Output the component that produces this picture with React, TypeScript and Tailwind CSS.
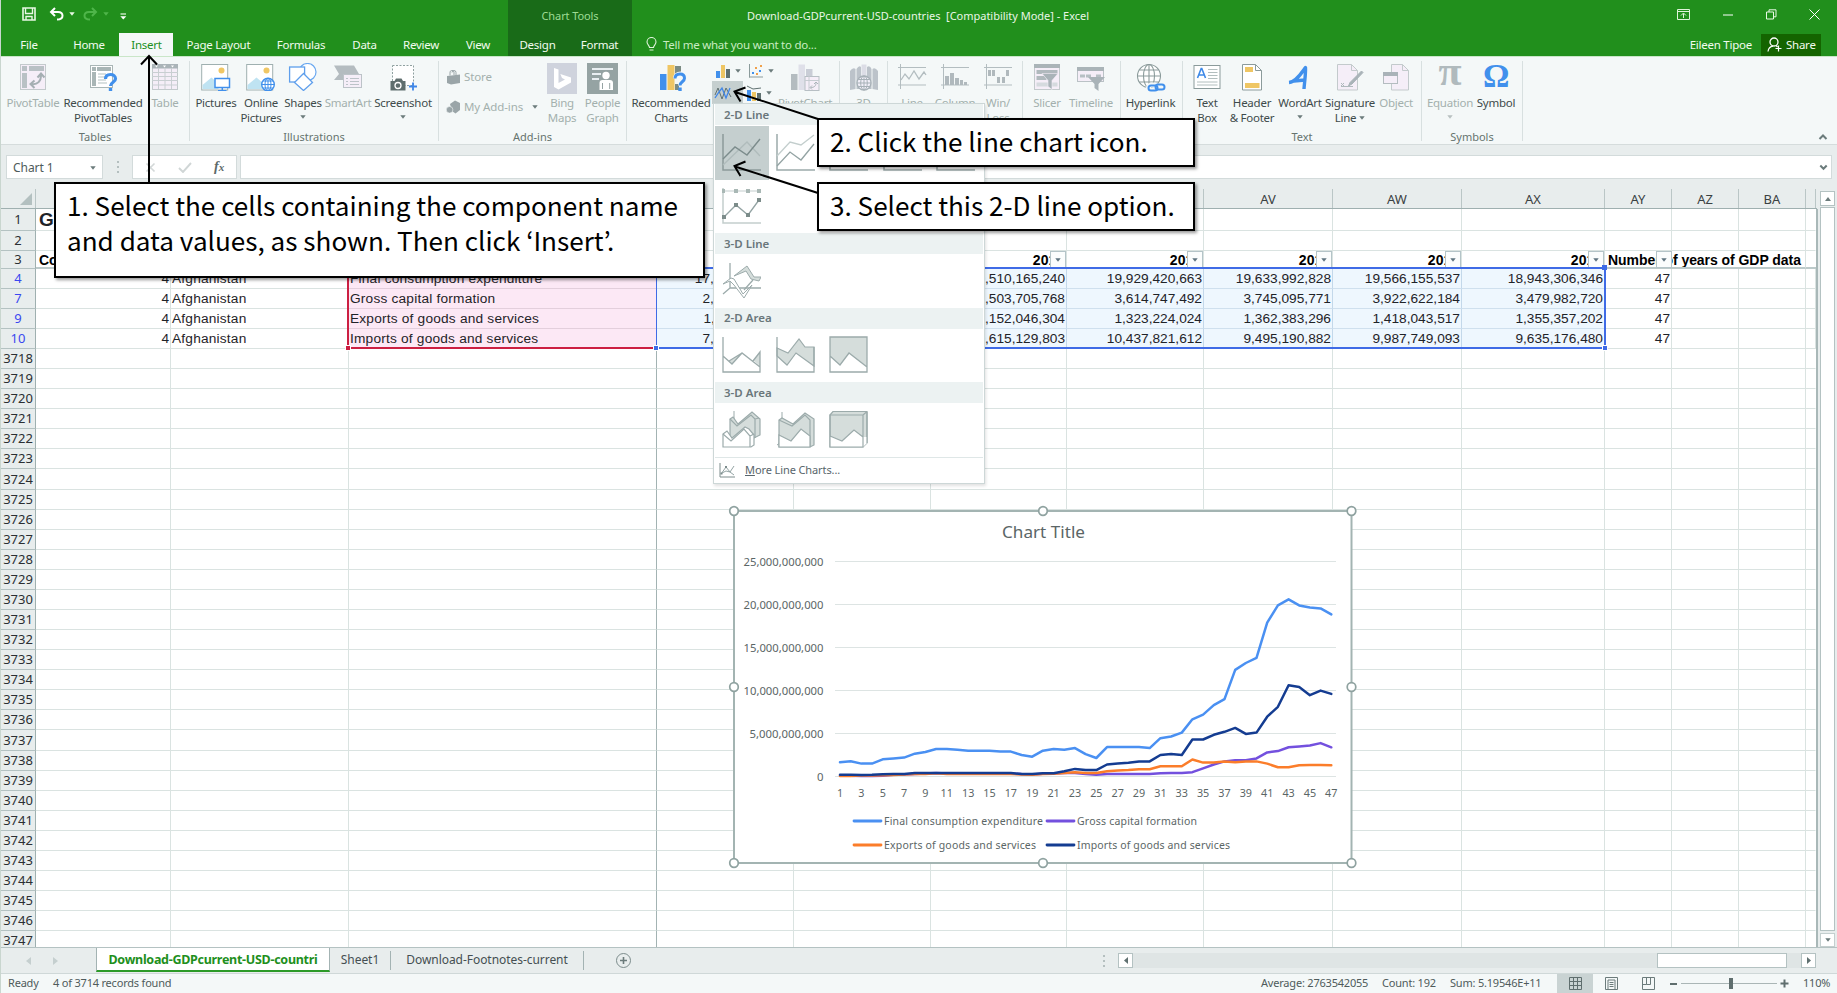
import React from "react";

type Kids = { children?: React.ReactNode };

const G = "#9aa5a8";
const GL = "#b4bcc0";
const PK = "#f5eef8";

const Svg = ({ w = 28, h = 28, children }: Kids & { w?: number; h?: number }) => (
  <svg width={w} height={h} viewBox={`0 0 ${w} ${h}`} fill="none" className="block shrink-0">
    {children}
  </svg>
);

const Caret = ({ c = "#6b7b7b" }: { c?: string }) => (
  <svg width="6" height="4" viewBox="0 0 6 4" className="inline-block shrink-0">
    <path d="M0.3 0.3h5.4L3 3.8z" fill={c} />
  </svg>
);

/* ---------- ribbon icons ---------- */
const PivotTableIcon = () => (
  <Svg>
    <rect x="1.500" y="1.500" width="25" height="25" fill={PK} stroke="#c3cacc" />
    <path d="M3 3h5v5H3zM10 3h15v5H10zM3 10h5v15H3z" fill="#b9c1c5" />
    <path d="M12 21c7 1 10-3 10-9M18.500 14.500L22 10.500l3.500 4M15.500 17.500L11.500 21l4 4" stroke="#a5afb3" strokeWidth="2" />
  </Svg>
);
const RecPivotIcon = () => (
  <Svg w={30}>
    <rect x="2.500" y="2.500" width="22" height="22" fill="#fff" stroke="#a9b6b6" />
    <path d="M4 4h4v4H4zM9 4h14v4H9zM4 9h4v14H4z" fill="#a9b6b6" />
    <path d="M10 11h8M10 14h7M10 17h8M10 20h9" stroke="#cdd6d6" strokeWidth="1.500" />
    <path d="M17.500 16c0-3 2.200-4.500 5-4.500s5 1.600 5 4.200c0 3.600-5 3.500-5 7.300" stroke="#4190ec" strokeWidth="3.200" />
    <rect x="20.800" y="25" width="3.400" height="3" fill="#4190ec" />
  </Svg>
);
const TableIcon = () => (
  <Svg>
    <rect x="1.500" y="2" width="25" height="24.500" fill={PK} stroke="#c3cacc" />
    <rect x="1" y="1" width="26" height="4.500" fill="#aab4b8" />
    <path d="M1 9.500h26M1 13.500h26M1 17.500h26M1 22h26M7.500 5v21M14 5v21M20.500 5v21" stroke="#c9cfd2" />
    <path d="M4 2.500h3l-1.500 2zM12 2.500h3l-1.500 2zM20 2.500h3l-1.500 2z" fill="#fff" />
  </Svg>
);
const PicBase = () => (
  <>
    <rect x="0.700" y="1.500" width="26" height="25.500" fill="#fff" stroke="#9fb0b0" />
    <circle cx="20.500" cy="7.500" r="3" fill="#f0c765" />
    <path d="M1.500 22l9-7.500 7 6V26h-16z" fill="#bfe3f2" />
  </>
);
const PicturesIcon = () => (
  <Svg w={30}>
    <PicBase />
    <rect x="14" y="15.500" width="14.500" height="9" fill="#fff" stroke="#4190ec" strokeWidth="1.500" />
    <path d="M21.300 25v2.500M17 27.700h8.500" stroke="#4190ec" strokeWidth="1.500" />
  </Svg>
);
const OnlinePicturesIcon = () => (
  <Svg w={30}>
    <PicBase />
    <circle cx="22" cy="21.500" r="6.300" fill="#fff" stroke="#4190ec" strokeWidth="1.400" />
    <path d="M22 15v13M15.700 21.500h12.600M17 18h10M17 25h10" stroke="#4190ec" />
    <ellipse cx="22" cy="21.500" rx="3" ry="6.300" stroke="#4190ec" />
  </Svg>
);
const ShapesIcon = () => (
  <Svg w={30}>
    <circle cx="19.500" cy="9" r="8.500" fill="#fff" stroke="#6aa8f0" strokeWidth="1.200" />
    <rect x="1.600" y="4" width="15" height="15" fill="#fff" stroke="#5f9fec" strokeWidth="1.300" />
    <path d="M15.500 10.500l9 9-9 8-9-8z" fill="#fff" stroke="#5f9fec" strokeWidth="1.300" />
  </Svg>
);
const SmartArtIcon = () => (
  <Svg w={30}>
    <path d="M1 2.500h20l5 8.500-4 6H1l5-6z" fill={GL} />
    <rect x="10.500" y="11.500" width="18" height="13" fill={PK} stroke="#bcc3c8" />
    <path d="M13 15.500h2M17 15.500h9M13 18.500h2M17 18.500h9M13 21.500h2M17 21.500h9" stroke="#bcc3c8" />
  </Svg>
);
const ScreenshotIcon = () => (
  <Svg w={28}>
    <rect x="3.500" y="2.500" width="21" height="20" fill="#fff" stroke="#8fa0a0" strokeDasharray="2 1.500" />
    <path d="M1.500 18h4l1.500-2.500h5.500L14 18h2.500v9.500h-15z" fill="#5f6e6e" />
    <circle cx="9" cy="22.500" r="3" stroke="#fff" strokeWidth="1.300" />
    <path d="M24 19.500v8M20 23.500h8" stroke="#3f86e8" strokeWidth="1.800" />
  </Svg>
);
const StoreIcon = () => (
  <Svg w={15} h={16}>
    <path d="M1 7l13-1.500V14L5 15.500 1 14z" fill={G} />
    <path d="M4 6.500V4a2 2 0 014-1v3M6 3.500a2 2 0 014 0V6" stroke={G} />
  </Svg>
);
const AddinsIcon = () => (
  <Svg w={15} h={14}>
    <path d="M4 4l5-3.500L14 3v7l-4.500 3.500L6 11z" fill={G} />
    <circle cx="3.600" cy="9.800" r="3.300" fill={G} stroke="#f4f8f8" strokeWidth="0.600" />
  </Svg>
);
const BingIcon = () => (
  <Svg w={30} h={31}>
    <rect width="30" height="31" fill="#cfd3dd" />
    <path d="M7 5l4.500 1.600v13.500L18 16.500l-3-1.400-1.700-4.200L24 14.600v5L11.500 26.500 7 24z" fill="#fff" />
  </Svg>
);
const PeopleIcon = () => (
  <Svg w={31} h={31}>
    <rect width="31" height="31" fill="#95a3a3" />
    <path d="M5 6h21M5 11h9M5 16h7" stroke="#e9eff2" strokeWidth="2" />
    <circle cx="19" cy="12.500" r="3.700" fill="#fff" />
    <path d="M12.500 27v-7q0-3 3-3h7.500q3 0 3 3v7z" fill="#fff" />
    <path d="M15.500 20v6M22.700 20v6" stroke="#95a3a3" />
  </Svg>
);
const RecChartsIcon = () => (
  <Svg w={28}>
    <rect x="2" y="11" width="6.500" height="16" fill="#4190ec" />
    <rect x="9.500" y="2" width="7" height="25" fill="#efc664" />
    <path d="M17 3h6v8h-6zM17 21h4v6h-4z" fill="#7b8b83" />
    <path d="M17.500 15.500c0-3 2.200-4.500 5-4.500s5 1.600 5 4.200c0 3.600-5 3.500-5 7.300" stroke="#f4f8f8" strokeWidth="5" />
    <path d="M17 15.500c0-3 2.200-4.500 5-4.500s4.500 1.600 4.500 4.200c0 3.600-4.500 3.500-4.500 7.300" stroke="#4190ec" strokeWidth="3" />
    <rect x="20.300" y="24.500" width="3.400" height="3.500" fill="#4190ec" />
  </Svg>
);
const PivotChartIcon = () => (
  <Svg w={30}>
    <rect x="1" y="11" width="6.500" height="16" fill={GL} />
    <rect x="8.500" y="1.500" width="6.500" height="25.500" fill="#dfe0e9" />
    <rect x="16" y="6" width="6.500" height="10" fill="#c9cdd6" />
    <rect x="15" y="13.500" width="14" height="14" fill={PK} stroke="#b7bfc4" />
    <path d="M15 17.500h14M19 13v14" stroke="#c6ccd1" />
    <path d="M20.500 24.500c4 0 5.500-1.500 5.500-5M24 21l2-2 2 2M22 22.500l-2 2 2 2" stroke="#adb6bb" />
  </Svg>
);
const MapIcon = () => (
  <Svg w={30}>
    <path d="M1 8q3-4 5.500-2v20L1 27zM29 8q-3-4-5.500-2v20l5.500 1zM7.500 6Q10 2 12 4v22H7.500zM18 4q3-2 4.500 2v20H18z" fill="#bcc3ca" />
    <rect x="12.500" y="1.500" width="5" height="24" fill="#dcdde6" />
    <circle cx="15" cy="20" r="7" fill="#f1eff8" stroke="#a7b1b7" strokeWidth="1.300" />
    <path d="M15 13v14M8 20h14M9.500 16.500h11M9.500 23.500h11" stroke="#a7b1b7" />
    <ellipse cx="15" cy="20" rx="3.300" ry="7" stroke="#a7b1b7" />
  </Svg>
);
const SparkFrame = () => <path d="M1 4.500h28M1 22h28M3.500 1v25" stroke="#b3bdc0" />;
const SparkLineIcon = () => (
  <Svg w={30}>
    <SparkFrame />
    <path d="M4 17l4-6 4 5 5-8 5 8 5-7 2 3" stroke="#b3bdc0" strokeWidth="1.300" />
  </Svg>
);
const SparkColIcon = () => (
  <Svg w={30}>
    <SparkFrame />
    <path d="M5 13h4v9H5zM10 10h4v12h-4zM15 15h4v7h-4zM20 17h3v5h-3zM24 19h3v3h-3z" fill="#b0b9bd" />
  </Svg>
);
const SparkWinIcon = () => (
  <Svg w={30}>
    <SparkFrame />
    <path d="M5 7h3v6H5zM9 7h3v6H9zM14 14h3v6h-3zM19 14h3v6h-3zM23 7h3v6h-3z" fill="#b0b9bd" />
  </Svg>
);
const SlicerIcon = () => (
  <Svg>
    <rect x="1.500" y="1.500" width="25" height="25" fill={PK} stroke="#c3cacc" />
    <rect x="1" y="1" width="26" height="4" fill="#aab4b8" />
    <rect x="3.500" y="7" width="21" height="4" fill="#b0b9bd" />
    <rect x="3.500" y="13" width="10" height="4" fill="#b0b9bd" />
    <rect x="3.500" y="19.500" width="21" height="4" fill="#d5dade" />
    <path d="M9 10.500h16l-6 7v9l-4-3v-6z" fill="#a9b3b8" stroke={PK} strokeWidth="0.600" />
  </Svg>
);
const TimelineIcon = () => (
  <Svg w={30}>
    <rect x="1.500" y="4.500" width="26" height="14" fill={PK} stroke="#bac2c6" />
    <rect x="1" y="4" width="27" height="4" fill="#aab4b8" />
    <path d="M4 11.500h5v3H4zM10 11.500h5v3h-5zM20 11.500h5v3h-5z" fill="#b7bfc4" />
    <path d="M12 14h17l-6.500 7v7l-4-3v-4z" fill="#a9b3b8" />
  </Svg>
);
const HyperlinkIcon = () => (
  <Svg w={30} h={30}>
    <g stroke="#8b9b9b" strokeWidth="1.100">
      <circle cx="13" cy="13" r="11.500" fill="#fff" />
      <ellipse cx="13" cy="13" rx="5.500" ry="11.500" />
      <path d="M13 1.500v23M1.500 13h23M3.500 7h19M3.500 19h19" />
    </g>
    <rect x="12.500" y="22" width="9" height="5.500" rx="2.700" stroke="#f4f8f8" strokeWidth="5" />
    <rect x="12.500" y="22.500" width="9" height="5" rx="2.500" stroke="#4190ec" strokeWidth="2" />
    <rect x="19.500" y="21.500" width="9" height="5" rx="2.500" stroke="#4190ec" strokeWidth="2" />
  </Svg>
);
const TextBoxIcon = () => (
  <Svg w={28}>
    <rect x="1" y="2.500" width="26" height="23" fill="#fff" stroke="#8b9b9b" />
    <path d="M4.500 15l3.700-9.500h.6L12.500 15M6 12h5" stroke="#3f8ae8" strokeWidth="1.600" />
    <path d="M15 6.500h9.500M15 9.500h9.500M15 12.500h9.500M15 15.500h9.500M4 19h20.500M4 22h20.500" stroke="#b2bebe" />
  </Svg>
);
const HeaderIcon = () => (
  <Svg w={22}>
    <path d="M1.500 1.500h13l6 6v19.500h-19z" fill="#fff" stroke="#8b9b9b" />
    <path d="M14.500 1.500v6h6" stroke="#8b9b9b" />
    <rect x="4" y="4" width="8" height="5" fill="#efc664" />
    <rect x="4" y="20" width="14.500" height="5" fill="#efc664" />
  </Svg>
);
const WordArtIcon = () => (
  <Svg w={26}>
    <path d="M2 19.500C9 19 14.500 10 18.500 4.500c.3 7-1 14-1.500 21.500M7 18l11-1" stroke="#4190ec" strokeWidth="3.400" strokeLinejoin="round" />
  </Svg>
);
const SignatureIcon = () => (
  <Svg w={28}>
    <path d="M1.500 1.500h14l6 6v19.500h-20z" fill={PK} stroke="#c3cacc" />
    <path d="M15.500 1.500v6h6" stroke="#c3cacc" />
    <path d="M25.500 8l1.500 1.500L16 21l-3.500 2 1.500-3.500z" fill="#a9b3b8" stroke="#a9b3b8" />
    <path d="M5 23.500h12M5 20l3 3M8 20l-3 3" stroke="#b0b9bd" />
  </Svg>
);
const ObjectIcon = () => (
  <Svg w={28}>
    <path d="M9.500 1.500h11l6 6v19.500h-17z" fill={PK} stroke="#c3cacc" />
    <path d="M20.500 1.500v6h6" stroke="#c3cacc" />
    <rect x="1.500" y="9.500" width="14" height="11" fill={PK} stroke="#b4bcc0" />
    <rect x="1" y="9" width="15" height="4" fill="#a9b3b8" />
  </Svg>
);

/* ---------- ribbon parts ---------- */
type BtnProps = { className: string; icon: React.ReactNode; lines: string[]; off?: boolean; caret?: "own" | "inline" };
const Btn = ({ className, icon, lines, off, caret }: BtnProps) => (
  <div className={`flex shrink-0 flex-col items-center whitespace-nowrap text-[11.500px] leading-[15px] tracking-[-0.25px] ${off ? "text-[#a3b0ad]" : "text-[#3e4b4b]"} ${className}`}>
    <div className="flex h-[34px] items-start justify-center pt-[2px]">{icon}</div>
    {lines.map((l, i) => (
      <div key={l} className="flex items-center gap-[3px]">
        {l}
        {caret === "inline" && i === lines.length - 1 && <Caret />}
      </div>
    ))}
    {caret === "own" && (
      <div className="flex h-[14px] items-center">
        <Caret c={off ? "#b8c1c1" : undefined} />
      </div>
    )}
  </div>
);

const Group = ({ className, label, children }: Kids & { className: string; label: string }) => (
  <div className={`mt-1 flex h-20 shrink-0 flex-col border-r border-[#d8e0e0] ${className}`}>
    <div className="flex h-[68px] shrink-0">{children}</div>
    <div className="text-center text-[11px] leading-[15px] text-[#66746f]">{label}</div>
  </div>
);

const Tab = ({ className, children }: Kids & { className: string }) => (
  <div className={`flex h-full shrink-0 items-center justify-center pl-px whitespace-nowrap ${className}`}>{children}</div>
);

const TitleBar = () => (
  <div className="flex h-[33px] shrink-0 text-[11px] text-[#e9f6e6]">
    <div className="flex w-[507px] shrink-0 items-center pb-[5px] pl-[21px]">
      <Svg w={14} h={14}>
        <path d="M1 1h12v12H1z" stroke="#e8f8e4" strokeWidth="1.600" />
        <path d="M3.500 1v5.500h7V1M4 13V9.500h6V13" stroke="#e8f8e4" strokeWidth="1.400" />
      </Svg>
      <div className="ml-[13px] flex items-center gap-[5px]">
        <Svg w={15} h={14}>
          <path d="M6 1L2 5l4 4M2 5h7c3 0 4.500 1.500 4.500 3.700S11.500 12.500 8 12.500" stroke="#fff" strokeWidth="2" />
        </Svg>
        <Caret c="#e8f8e4" />
      </div>
      <div className="ml-[8px] flex items-center gap-[5px]">
        <Svg w={15} h={14}>
          <path d="M9 1l4 4-4 4M13 5H6C3 5 1.500 6.500 1.500 8.700S3.500 12.500 7 12.500" stroke="#4fb54a" strokeWidth="2" />
        </Svg>
        <Caret c="#4fb54a" />
      </div>
      <div className="mt-[4px] ml-[11px]">
        <Svg w={7} h={7}>
          <path d="M0.500 1h5.500" stroke="#e8f8e4" strokeWidth="1.200" />
          <path d="M0.300 3.200h6L3.300 6.500z" fill="#fff" />
        </Svg>
      </div>
    </div>
    <div className="flex w-[124px] shrink-0 items-center justify-center bg-[#196b18] tracking-[-0.1px] text-[#9ddb94]">Chart Tools</div>
    <div className="ml-[115px] flex w-[343px] shrink-0 items-center whitespace-pre tracking-[-0.020px]">
      {"Download-GDPcurrent-USD-countries  [Compatibility Mode] - Excel"}
    </div>
    <div className="ml-auto flex items-center gap-[32px] pr-[17px] pb-[5px]">
      <Svg w={13} h={11}>
        <path d="M0.500 0.500h12v10H0.500zM0.500 2.500h12M6.500 9V4.500M4 6.500L6.500 4 9 6.500" stroke="#dff3da" />
      </Svg>
      <Svg w={12} h={11}><path d="M1 6h10" stroke="#fff" /></Svg>
      <Svg w={11} h={11}>
        <path d="M0.500 3h7v7h-7zM3 3V0.800h7v7H7.500" stroke="#e9f8e6" />
      </Svg>
      <Svg w={11} h={11}><path d="M0.500 0.500l10 10M10.500 0.500l-10 10" stroke="#fff" /></Svg>
    </div>
  </div>
);

const TabRow = () => (
  <div className="flex h-[23px] shrink-0 text-[11.500px] tracking-[-0.25px] text-[#f2fbef]">
    <Tab className="w-[55px]">File</Tab>
    <Tab className="ml-[2px] w-[61px]">Home</Tab>
    <Tab className="w-[54px] bg-[#f4f8f8] text-[#218f1c]">Insert</Tab>
    <Tab className="w-[90px]">Page Layout</Tab>
    <Tab className="w-[75px]">Formulas</Tab>
    <Tab className="w-[52px]">Data</Tab>
    <Tab className="w-[61px]">Review</Tab>
    <Tab className="w-[53px]">View</Tab>
    <Tab className="ml-[4px] w-[58px] bg-[#196b18]">Design</Tab>
    <Tab className="w-[66px] bg-[#196b18]">Format</Tab>
    <div className="ml-[14px] flex items-center gap-[6px] text-[#c9ecc2]">
      <Svg w={11} h={15}>
        <path d="M3.500 10.500C3.500 8.500 1 7.500 1 5a4.500 4.500 0 019 0c0 2.500-2.500 3.500-2.500 5.500zM3.500 13h4" stroke="#dff3da" strokeWidth="1.100" />
      </Svg>
      Tell me what you want to do...
    </div>
    <div className="ml-auto flex items-center pr-[16px]">
      <div className="mr-[9px]">Eileen Tipoe</div>
      <div className="flex h-[22px] w-[60px] items-center gap-[4px] bg-[#146400] pl-[6px]">
        <Svg w={15} h={15}>
          <circle cx="7" cy="5" r="4" stroke="#fff" strokeWidth="1.300" />
          <path d="M1 14.500c.5-3.500 2.500-5 5-5.300M9 8.500l1.500 1.500M8.500 11.500h6M11.500 8.500v6" stroke="#fff" strokeWidth="1.200" />
        </Svg>
        Share
      </div>
    </div>
  </div>
);

const Ribbon = () => (
  <div className="flex h-[89px] shrink-0 border-t border-b border-t-[#c9e6c8] border-b-[#d5dcdc] bg-[#f4f8f8]">
    <Group className="w-[189px]" label="Tables">
      <Btn className="ml-[4px] w-[56px]" off icon={<PivotTableIcon />} lines={["PivotTable"]} />
      <Btn className="w-[84px]" icon={<RecPivotIcon />} lines={["Recommended", "PivotTables"]} />
      <Btn className="ml-[2px] w-[36px]" off icon={<TableIcon />} lines={["Table"]} />
    </Group>
    <Group className="w-[249px]" label="Illustrations">
      <Btn className="ml-[4px] w-[44px]" icon={<PicturesIcon />} lines={["Pictures"]} />
      <Btn className="ml-[2px] w-[42px]" icon={<OnlinePicturesIcon />} lines={["Online", "Pictures"]} />
      <Btn className="ml-[2px] w-[38px]" icon={<ShapesIcon />} lines={["Shapes"]} caret="own" />
      <Btn className="ml-[2px] w-[48px]" off icon={<SmartArtIcon />} lines={["SmartArt"]} />
      <Btn className="ml-[2px] w-[58px]" icon={<ScreenshotIcon />} lines={["Screenshot"]} caret="own" />
    </Group>
    <Group className="w-[188px]" label="Add-ins">
      <div className="ml-[7px] flex w-[94px] shrink-0 flex-col gap-[14px] pt-[8px] text-[11.500px] leading-[16px] tracking-[-0.1px] whitespace-nowrap text-[#a3b0ad]">
        <div className="flex items-center gap-[3px]"><StoreIcon />Store</div>
        <div className="flex items-center gap-[3px]">
          <AddinsIcon />My Add-ins<span className="ml-[6px] flex"><Caret /></span>
        </div>
      </div>
      <Btn className="ml-[2px] w-[40px]" off icon={<BingIcon />} lines={["Bing", "Maps"]} />
      <Btn className="w-[41px]" off icon={<PeopleIcon />} lines={["People", "Graph"]} />
    </Group>
    <Group className="w-[213px]" label="Charts">
      <Btn className="ml-[3px] w-[82px]" icon={<div className="pl-[2px]"><RecChartsIcon /></div>} lines={["Recommended", "Charts"]} />
      <div className="flex w-[64px] shrink-0 flex-col">
        <div className="flex h-[20px] items-center">
          <Svg w={20} h={16}>
            <path d="M4 8h4v7H4z" fill="#4190ec" /><path d="M9 2h4v13H9z" fill="#efc664" /><path d="M14 6h4v9h-4z" fill="#5f7070" />
          </Svg>
          <span className="ml-[3px] flex"><Caret /></span>
          <span className="ml-[7px] flex">
            <Svg w={16} h={16}>
              <path d="M1.500 1v13.500M1 14h14" stroke="#8b9b9b" />
              <path d="M4 9h2v2H4zM11 7h2v2h-2z" fill="#4190ec" /><path d="M7 4h2v2H7zM12 2h2v2h-2zM8 10h2v2H8z" fill="#f0a04a" />
            </Svg>
          </span>
          <span className="ml-[4px] flex"><Caret /></span>
        </div>
        <div className="flex h-[23px] items-center">
          <div className="flex h-full w-[31px] items-center bg-[#c5cfcf] pl-[2px]">
            <Svg w={18} h={16}>
              <path d="M1 10l3-7 4 11 4-11 5 9" stroke="#5f7070" /><path d="M1 13l4-6 3-4 4 10 4-10" stroke="#3f86e8" strokeWidth="1.300" />
            </Svg>
          </div>
          <Svg w={20} h={18}>
            <path d="M4 6h4v11H4z" fill="#4190ec" /><path d="M9 8h4v9H9z" fill="#efc664" /><path d="M14 9h4v8h-4z" fill="#5f7070" />
            <path d="M4 2l6 3 8-1" stroke="#5f7070" />
          </Svg>
          <span className="ml-[3px] flex"><Caret /></span>
        </div>
      </div>
      <Btn className="ml-[4px] w-[50px]" off icon={<PivotChartIcon />} lines={["PivotChart"]} />
    </Group>
    <Group className="w-[48px]" label="Tours">
      <Btn className="w-[47px]" off icon={<MapIcon />} lines={["3D", "Map"]} />
    </Group>
    <Group className="w-[135px]" label="Sparklines">
      <Btn className="ml-[4px] w-[40px]" off icon={<SparkLineIcon />} lines={["Line"]} />
      <Btn className="ml-[1px] w-[44px]" off icon={<SparkColIcon />} lines={["Column"]} />
      <Btn className="ml-[1px] w-[40px]" off icon={<SparkWinIcon />} lines={["Win/", "Loss"]} />
    </Group>
    <Group className="w-[98px]" label="Filters">
      <Btn className="ml-[4px] w-[40px]" off icon={<SlicerIcon />} lines={["Slicer"]} />
      <Btn className="w-[48px]" off icon={<TimelineIcon />} lines={["Timeline"]} />
    </Group>
    <Group className="w-[62px]" label="Links">
      <Btn className="-ml-px w-[61px]" icon={<HyperlinkIcon />} lines={["Hyperlink"]} />
    </Group>
    <Group className="w-[239px]" label="Text">
      <Btn className="ml-[4px] w-[40px]" icon={<TextBoxIcon />} lines={["Text", "Box"]} />
      <Btn className="w-[50px]" icon={<HeaderIcon />} lines={["Header", "& Footer"]} />
      <Btn className="w-[46px]" icon={<WordArtIcon />} lines={["WordArt"]} caret="own" />
      <Btn className="w-[54px]" icon={<SignatureIcon />} lines={["Signature", "Line"]} caret="inline" />
      <Btn className="w-[38px]" off icon={<ObjectIcon />} lines={["Object"]} />
    </Group>
    <Group className="w-[101px]" label="Symbols">
      <Btn
        className="ml-[3px] w-[50px]"
        off
        icon={<div className="mt-[-9px] font-['Liberation_Serif',serif] text-[42px] leading-[34px] font-bold text-[#b0babd]">π</div>}
        lines={["Equation"]}
        caret="own"
      />
      <Btn
        className="w-[42px]"
        icon={<div className="mt-[-2px] font-['Liberation_Serif',serif] text-[33px] leading-[30px] font-bold text-[#4190ec]">Ω</div>}
        lines={["Symbol"]}
      />
    </Group>
    <div className="ml-auto flex items-end pr-[9px] pb-[3px]">
      <Svg w={10} h={8}><path d="M1.500 6L5 2.500 8.500 6" stroke="#6b7b7b" strokeWidth="2" /></Svg>
    </div>
  </div>
);

const FormulaBar = () => (
  <div className="flex h-[44px] shrink-0 items-start bg-[#e8eded] pt-[10px] pl-[5px]">
    <div className="flex h-[24px] w-[97px] items-center justify-between border border-[#d3dbdb] bg-white pt-px pr-[6px] pl-[6px] text-[12px] tracking-[-0.050px] text-[#4e5a5a]">
      Chart 1 <Caret />
    </div>
    <div className="ml-[13px] flex h-[24px] w-[3px] flex-col items-center justify-center gap-[3px]">
      <i className="size-[2px] bg-[#b4bfbf]" /><i className="size-[2px] bg-[#b4bfbf]" /><i className="size-[2px] bg-[#b4bfbf]" />
    </div>
    <div className="ml-[13px] flex h-[24px] w-[105px] items-center border border-[#d3dbdb] bg-white">
      <span className="ml-[12px]"><Svg w={11} h={11}><path d="M1.500 1.500l8 8M9.500 1.500l-8 8" stroke="#d3d8d8" strokeWidth="1.700" /></Svg></span>
      <span className="ml-[22px]"><Svg w={14} h={11}><path d="M1 6l4 4L13 1" stroke="#d0d6d6" strokeWidth="1.900" /></Svg></span>
      <span className="ml-[22px] font-['Liberation_Serif',serif] text-[14px] leading-none font-bold text-[#5c6969] italic">f<span className="text-[11px]">x</span></span>
    </div>
    <div className="ml-[3px] flex h-[24px] w-[1592px] items-center justify-end border border-[#d3dbdb] bg-white pr-[3px]">
      <Svg w={9} h={7}><path d="M1.300 1.500L4.500 4.800 7.700 1.500" stroke="#6b7b7b" strokeWidth="2" /></Svg>
    </div>
  </div>
);

/* ---------- sheet ---------- */
const COLS = [
  "w-[135px]", "w-[178px]", "w-[308px]", "w-[137px]", "w-[137px]", "w-[136px]", "w-[137px]",
  "w-[129px]", "w-[129px]", "w-[143px]", "w-[67px]", "w-[67px]", "w-[67px]", "w-[10px]",
];
const LETTERS = ["", "", "", "", "", "", "", "AV", "AW", "AX", "AY", "AZ", "BA", ""];

const DATA: { n: string; v: string[] }[] = [
  { n: "4", v: ["4", "Afghanistan", "Final consumption expenditure", "17,902,100,514", "19,907,213,808", "20,510,165,240", "19,929,420,663", "19,633,992,828", "19,566,155,537", "18,943,306,346", "47"] },
  { n: "7", v: ["4", "Afghanistan", "Gross capital formation", "2,806,410,225", "2,951,342,870", "3,503,705,768", "3,614,747,492", "3,745,095,771", "3,922,622,184", "3,479,982,720", "47"] },
  { n: "9", v: ["4", "Afghanistan", "Exports of goods and services", "1,512,320,117", "1,071,300,922", "1,152,046,304", "1,323,224,024", "1,362,383,296", "1,418,043,517", "1,355,357,202", "47"] },
  { n: "10", v: ["4", "Afghanistan", "Imports of goods and services", "7,004,126,318", "8,102,557,906", "10,615,129,803", "10,437,821,612", "9,495,190,882", "9,987,749,093", "9,635,176,480", "47"] },
];
const EMPTY = Array.from({ length: 30 }, (_, i) => String(3718 + i));
const YEARS = ["2010", "2011", "2012", "2013", "2014", "2015", "2016"];

const RowHead = ({ n, blue }: { n: string; blue?: boolean }) => (
  <div className={`flex w-[35px] shrink-0 items-center justify-center border-r border-b border-r-[#9fb0b0] border-b-[#b4c2c2] bg-[#e8eded] font-['Noto_Sans',sans-serif] text-[13px] leading-none font-normal ${blue ? "text-[#3a48f0]" : "text-[#2b2f33]"}`}>
    {n}
  </div>
);

const cellBorder = (i: number) =>
  i === 2 ? "border-r-[#a3b3b3]" : i === 13 ? "border-r-transparent" : "border-r-[#dae3e1]";

const Filter = () => (
  <div className="flex h-[17px] w-[16px] items-center justify-center border border-[#b4c4c8] bg-[#fbfdfd]">
    <Caret c="#5f7480" />
  </div>
);

const Sheet = () => (
  <div className="relative flex h-[758px] shrink-0 overflow-hidden bg-[#e8eded]">
    <div className="flex w-[1816px] shrink-0 flex-col font-['Liberation_Sans',sans-serif] text-[13.700px] leading-none text-[#1f2328]">
      <div className="flex h-[20px] shrink-0 border-b border-[#9fb0b0] font-['Noto_Sans',sans-serif] text-[13px] text-[#3a4142]">
        <div className="flex w-[35px] shrink-0 items-end justify-end border-r border-[#b9c5c5] p-[3px]">
          <Svg w={12} h={12}><path d="M12 0v12H0z" fill="#b3c0c0" /></Svg>
        </div>
        {COLS.map((w, i) => (
          <div key={i} className={`flex shrink-0 items-center justify-center border-r border-[#bac6c6] pt-[2px] ${w}`}>{LETTERS[i]}</div>
        ))}
      </div>
      <div className="flex h-[22px] shrink-0">
        <RowHead n="1" />
        {COLS.map((w, i) => (
          <div key={i} className={`flex shrink-0 items-center border-r border-b border-b-[#dae3e1] bg-white pl-[3px] text-[19px] font-bold ${w} ${cellBorder(i)}`}>{i === 0 ? "G" : ""}</div>
        ))}
      </div>
      <div className="flex h-[20px] shrink-0">
        <RowHead n="2" />
        {COLS.map((w, i) => <div key={i} className={`shrink-0 border-r border-b border-b-[#dae3e1] bg-white ${w} ${cellBorder(i)}`} />)}
      </div>
      <div className="flex h-[18px] shrink-0 bg-white text-[14px] font-bold text-black">
        <RowHead n="3" />
        {COLS.map((w, i) => (
          <div
            key={i}
            className={`relative flex shrink-0 items-center border-b-2 border-b-[#bccaca] pt-px whitespace-nowrap ${w} ${i < 10 || i === 12 ? "border-r border-r-[#dae3e1]" : ""} ${i >= 3 && i < 10 ? "justify-end pr-[2px]" : "pl-[3px]"}`}
          >
            {i === 0 && "Co"}
            {i >= 3 && i < 10 && YEARS[i - 3]}
            {i === 10 && <span className="tracking-[-0.050px]">Number of years of GDP data</span>}
            {i >= 3 && i <= 10 && <div className="absolute top-0 right-0"><Filter /></div>}
          </div>
        ))}
      </div>
      {DATA.map((r) => (
        <div key={r.n} className="flex h-[20px] shrink-0">
          <RowHead n={r.n} blue />
          {COLS.map((w, i) => (
            <div
              key={i}
              className={`flex shrink-0 items-center overflow-hidden border-r border-b whitespace-nowrap ${w} ${
                i === 2 ? "border-r-[#a3b3b3] border-b-[#e3cfdc] bg-[#fce8f5]" : i > 2 && i < 10 ? "border-r-[#c3d8ea] border-b-[#cfe0ee] bg-[#eef7fe]" : "border-r-[#dae3e1] border-b-[#dae3e1] bg-white"
              } ${i === 1 || i === 2 ? "justify-start pl-[1px] tracking-[0.200px]" : i === 3 ? "justify-end pr-[3px]" : "justify-end pr-[1px]"}`}
            >
              {r.v[i]}
            </div>
          ))}
        </div>
      ))}
      {EMPTY.map((n) => (
        <div key={n} className="flex h-[20.090px] shrink-0">
          <RowHead n={n} />
          {COLS.map((w, i) => <div key={i} className={`shrink-0 border-r border-b border-b-[#dae3e1] bg-white ${w} ${cellBorder(i)}`} />)}
        </div>
      ))}
    </div>
    {/* range outlines */}
    <div className="absolute top-[78px] left-[346px] h-[82px] w-[309px] border-2 border-r-0 border-[#cc1f42]" />
    <div className="absolute top-[78px] left-[655px] h-[82px] w-[950px] border-2 border-l-1 border-[#3f6be6]" />
    <i className="absolute top-[156px] left-[344px] size-[6px] border border-white bg-[#cc1f42]" />
    <i className="absolute top-[156px] left-[652px] size-[6px] border border-white bg-[#3f6be6]" />
    <i className="absolute top-[76px] left-[1601px] size-[5px] bg-[#3f6be6]" />
    <i className="absolute top-[156px] left-[1601px] size-[6px] border border-white bg-[#3f6be6]" />
    {/* vertical scrollbar */}
    <div className="mt-[20px] -ml-px w-[2px] shrink-0 bg-[#a9b8b8]" />
    <div className="ml-[2px] flex w-[15px] flex-col pt-[2px]">
      <div className="flex h-[15px] items-center justify-center border border-[#b4c2c2] bg-white">
        <Svg w={6} h={4}><path d="M0 4h6L3 0z" fill="#6b7b7b" /></Svg>
      </div>
      <div className="mt-px h-[724px] border border-[#b4c2c2] bg-white" />
      <div className="mt-[2px] flex h-[14px] items-center justify-center border border-[#c4cfcf] bg-white"><Caret /></div>
    </div>
  </div>
);

/* ---------- chart ---------- */
const FINAL = [1.65, 1.77, 1.5, 1.5, 2, 2.1, 2.2, 2.65, 2.85, 3.2, 3.2, 3.1, 3, 3, 3, 2.9, 2.9, 2.5, 2.3, 3, 3.2, 3.1, 3.3, 2.6, 2.15, 3.42, 3.42, 3.42, 3.42, 3.3, 4.45, 4.65, 5.1, 6.65, 7.2, 8.3, 9, 12.4, 13.2, 13.8, 17.9, 19.9, 20.6, 19.9, 19.65, 19.55, 18.85];
const IMPORTS = [0.2, 0.2, 0.18, 0.2, 0.27, 0.28, 0.3, 0.4, 0.4, 0.42, 0.4, 0.4, 0.4, 0.4, 0.4, 0.4, 0.4, 0.3, 0.28, 0.38, 0.38, 0.6, 0.88, 0.75, 0.75, 1.4, 1.5, 1.6, 1.75, 1.75, 2.5, 2.6, 2.5, 4.3, 4.3, 4.85, 5.2, 5.65, 4.95, 5.1, 6.95, 8.1, 10.6, 10.4, 9.45, 9.99, 9.6];
const EXPORTS = [0.07, 0.07, 0.1, 0.12, 0.15, 0.18, 0.22, 0.3, 0.3, 0.38, 0.3, 0.3, 0.3, 0.3, 0.3, 0.3, 0.3, 0.25, 0.2, 0.28, 0.33, 0.42, 0.5, 0.42, 0.4, 0.62, 0.7, 0.75, 0.85, 0.85, 1.2, 1.2, 1.2, 1.98, 1.62, 1.62, 1.75, 1.65, 1.75, 1.75, 1.5, 1.07, 1.07, 1.3, 1.32, 1.32, 1.3];
const GROSS = [0.08, 0.08, 0.05, 0.05, 0.08, 0.2, 0.25, 0.3, 0.35, 0.4, 0.35, 0.35, 0.35, 0.35, 0.35, 0.35, 0.35, 0.28, 0.25, 0.32, 0.35, 0.4, 0.4, 0.3, 0.2, 0.28, 0.3, 0.3, 0.3, 0.3, 0.37, 0.4, 0.4, 0.5, 0.95, 1.4, 1.75, 1.9, 1.88, 2.1, 2.8, 2.95, 3.4, 3.5, 3.6, 3.88, 3.4];
const pts = (d: number[]) => d.map((v, i) => `${(109 + i * 10.68).toFixed(1)},${(268.5 - v * 8.6).toFixed(1)}`).join(" ");
const TICKS = ["25,000,000,000", "20,000,000,000", "15,000,000,000", "10,000,000,000", "5,000,000,000", "0"];

const Legend = ({ x, y, w, c, t }: { x: number; y: number; w: number; c: string; t: string }) => (
  <>
    <path d={`M${x} ${y}h27`} stroke={c} strokeWidth="2.800" strokeLinecap="round" />
    <text x={x + 30} y={y + 3.5} textLength={w} fontSize="10.500">{t}</text>
  </>
);

const Chart = () => (
  <div className="absolute top-[504px] left-[726px]">
    <svg width="632" height="366" viewBox="-4 -4 632 366" className="block font-['Noto_Sans',sans-serif]" fill="none">
      <rect x="3" y="3" width="617.500" height="352" fill="#fff" stroke="#a3b4b2" strokeWidth="2" />
      <g fill="#5b6666">
        <text x="271" y="30" textLength="83" fontSize="17" lengthAdjust="spacingAndGlyphs">Chart Title</text>
        {TICKS.map((t, i) => (
          <g key={t}>
            <path d={`M104 ${53.5 + i * 43}h501`} stroke="#dde4e3" />
            <text x="92.500" y={57.500 + i * 43} textAnchor="end" textLength={[80, 80, 80, 80, 74, 6.5][i]} fontSize="10.800" lengthAdjust="spacingAndGlyphs">{t}</text>
          </g>
        ))}
        {Array.from({ length: 24 }, (_, i) => (
          <text key={i} x={109 + i * 21.36} y="289" textAnchor="middle" fontSize="10.800">{i * 2 + 1}</text>
        ))}
        <Legend x={123} y={313} w={159} c="#4a90f2" t="Final consumption expenditure" />
        <Legend x={316} y={313} w={120} c="#7350de" t="Gross capital formation" />
        <Legend x={123} y={337} w={152} c="#fb7d2a" t="Exports of goods and services" />
        <Legend x={316} y={337} w={153} c="#143c91" t="Imports of goods and services" />
      </g>
      <g strokeWidth="2.500" strokeLinejoin="round" strokeLinecap="round">
        <polyline points={pts(FINAL)} stroke="#4a90f2" />
        <polyline points={pts(GROSS)} stroke="#7350de" />
        <polyline points={pts(EXPORTS)} stroke="#fb7d2a" />
        <polyline points={pts(IMPORTS)} stroke="#143c91" />
      </g>
      {[[3, 3], [312, 3], [620.5, 3], [3, 179], [620.5, 179], [3, 355], [312, 355], [620.5, 355]].map(([x, y]) => (
        <circle key={`${x}-${y}`} cx={x} cy={y} r="4.300" fill="#fff" stroke="#8fa2a0" strokeWidth="1.700" />
      ))}
    </svg>
  </div>
);

/* ---------- line-chart gallery ---------- */
const A = "#9cabab";
const L = "#c3cecd";
const F = "#d5dddb";
const Axes = ({ c = A }: { c?: string }) => <path d="M1 0v36h38" stroke={c} strokeWidth="1.500" />;
const Pic = ({ children }: Kids) => <Svg w={39} h={38}>{children}</Svg>;

const Cell = ({ on, children }: Kids & { on?: boolean }) => (
  <div className={`flex h-[53.500px] w-[53.500px] shrink-0 items-center justify-center ${on ? "bg-[#c5cfcf]" : ""}`}>{children}</div>
);
const Band = ({ children }: Kids) => (
  <div className="flex h-[21px] shrink-0 items-center bg-[#ecf2f2] pl-[9px] text-[11.500px] font-semibold text-[#69767a]">{children}</div>
);

const Stacked = () => (
  <Pic>
    <Axes />
    <path d="M1 22l13-14 11 3 13-10" stroke={L} strokeWidth="1.300" />
    <path d="M1 32l13-14 11 8 13-16" stroke="#93a3a3" strokeWidth="1.300" />
  </Pic>
);

const Gallery = () => (
  <div className="absolute top-[103px] left-[713px] flex h-[381px] w-[272px] flex-col border border-[#cdd7d7] bg-white p-px pt-0 shadow-[1px_2px_3px_rgba(0,0,0,0.12)]">
    <Band>2-D Line</Band>
    <div className="flex h-[54px] shrink-0 pt-px">
      <Cell on>
        <Pic>
          <Axes c="#8c9b9b" />
          <path d="M1 31L25 8l13 14" stroke="#b0bcbc" strokeWidth="1.300" />
          <path d="M1 25l12-12 12 8L38 5" stroke="#7c8c8c" strokeWidth="1.400" />
        </Pic>
      </Cell>
      <Cell><Stacked /></Cell><Cell><Stacked /></Cell><Cell><Stacked /></Cell><Cell><Stacked /></Cell>
    </div>
    <div className="flex h-[54px] shrink-0">
      <Cell>
        <Pic>
          <path d="M1 1v35h38" stroke={L} strokeWidth="1.500" />
          <path d="M1 4h36" stroke={L} strokeWidth="1.200" />
          <path d="M-1 2h4v4h-4zM12 2h4v4h-4zM24 2h4v4h-4zM35 2h4v4h-4z" fill="#a9b8b5" />
          <path d="M2 30l12-12 12 10L37 13" stroke="#93a3a3" strokeWidth="1.300" />
          <path d="M0 28h4v4H0zM12 16h4v4h-4zM24 26h4v4h-4zM35 11h4v4h-4z" fill="#7c8c8a" />
        </Pic>
      </Cell>
    </div>
    <Band>3-D Line</Band>
    <div className="flex h-[53.500px] shrink-0">
      <Cell>
        <Pic>
          <path d="M8 1v25h31M8 26L1 32" stroke={A} strokeWidth="1.300" />
          <path d="M12 14L25 4l7 11 7 0-2 4-8-2-5-8z" fill={F} stroke={A} />
          <path d="M1 22l8-6 3 1 9 15 9-9-8 13-10-13-4-4z" fill="#fff" stroke={A} />
          <path d="M22 28l9-10" stroke={A} strokeWidth="1.300" />
        </Pic>
      </Cell>
    </div>
    <Band>2-D Area</Band>
    <div className="flex h-[53.500px] shrink-0">
      <Cell>
        <Pic>
          <path d="M1 20l6 5 13-8-10 11zM31 24l7-8v14z" fill={F} />
          <path d="M1 1v35h37V16l-7 9M1 20l9 8 10-11 18 14M7 25l13-8" stroke={A} strokeWidth="1.300" />
        </Pic>
      </Cell>
      <Cell>
        <Pic>
          <path d="M1 12l11 5L23 3l6 8h9v19L20 17l-9 12L1 20z" fill={F} stroke={A} strokeWidth="1.200" />
          <path d="M1 1v35h37V11" stroke={A} strokeWidth="1.300" />
        </Pic>
      </Cell>
      <Cell>
        <Pic>
          <path d="M1 1h37v30L20 17 11 29 1 20z" fill={F} />
          <path d="M1 1h37v35H1zM1 20l10 9 9-12 18 14" stroke={A} strokeWidth="1.300" />
        </Pic>
      </Cell>
    </div>
    <Band>3-D Area</Band>
    <div className="flex h-[53.500px] shrink-0">
      <Cell>
        <Pic>
          <path d="M12 0v12" stroke={A} />
          <path d="M8 8l3-2 5 7L30 1l8 7v16l-6 3H8z" fill={F} stroke={A} strokeWidth="1.200" />
          <path d="M8 8l7 7L29 4l4 4v19M33 8l4-1" stroke={A} strokeWidth="1.200" />
          <path d="M1 23l4-3 5 7 13-11 4 2 5 6v10l-3 2H1z" fill="#fff" stroke={A} strokeWidth="1.200" />
          <path d="M1 23l8 7 13-12 6 7v11M28 25l4-2" stroke={A} strokeWidth="1.200" />
        </Pic>
      </Cell>
      <Cell>
        <Pic>
          <path d="M6 1v8M1 34l3-2" stroke={A} />
          <path d="M3 9l3-2 11 6L29 2l9 6v26l-4 2H3z" fill={F} stroke={A} strokeWidth="1.200" />
          <path d="M3 9l13 6L29 4l5 5v27" stroke={A} strokeWidth="1.200" />
          <path d="M3 24l12 6 10-12 9 7v11H3z" fill="#fff" stroke={A} strokeWidth="1.200" />
        </Pic>
      </Cell>
      <Cell>
        <Pic>
          <path d="M1 4l3-3.500h34V32l-4 4H1z" fill={F} stroke={A} strokeWidth="1.200" />
          <path d="M1 25l12 5 12-11 9 7v10H1z" fill="#fff" />
          <path d="M34 26l4 0v6l-4 4z" fill="#fff" />
          <path d="M1 4h33v32H1zM34 4l4-3.500M1 25l12 5 12-11 9 7M38 1v31" stroke={A} strokeWidth="1.200" />
        </Pic>
      </Cell>
    </div>
    <div className="flex flex-1 items-center border-t border-[#dfe7e7] pt-px pl-[4px] text-[11px] tracking-[-0.1px] text-[#58656b]">
      <Svg w={16} h={16}>
        <path d="M1 1v14h15" stroke="#7c8c8c" />
        <path d="M2 12l5-7 4 5 4 3M3 11l4-2 4 1 4-6" stroke="#93a3a3" />
        <path d="M1.500 10.500h2v2h-2zM6 4h2v2H6z" fill="#7c8c8c" />
      </Svg>
      <span className="ml-[10px]"><u>M</u>ore Line Charts...</span>
    </div>
  </div>
);

/* ---------- bottom bars ---------- */
const SheetTabs = () => (
  <div className="flex h-[27px] shrink-0 items-center border-t border-b border-t-[#b4c2c2] border-b-[#cfd8d8] bg-[#e8eded] text-[12px] tracking-[-0.050px] text-[#454f52]">
    <div className="flex w-[95px] shrink-0 items-center gap-[22px] pl-[25px]">
      <Svg w={5} h={8}><path d="M5 0v8L0 4z" fill="#c5cfcf" /></Svg>
      <Svg w={5} h={8}><path d="M0 0v8l5-4z" fill="#c5cfcf" /></Svg>
    </div>
    <div className="mb-[2px] flex h-[24px] w-[234px] shrink-0 items-center justify-center border-r border-b-2 border-l border-r-[#a3b3b3] border-b-[#2c9a28] border-l-[#a3b3b3] bg-white pt-[3px] text-[12.500px] font-bold tracking-[-0.280px] text-[#218f1c]">
      Download-GDPcurrent-USD-countri
    </div>
    <div className="flex h-[19px] w-[61px] items-center justify-center border-r border-[#a3b3b3] pb-px">Sheet1</div>
    <div className="flex h-[19px] w-[193px] items-center justify-center border-r border-[#a3b3b3] pb-px">Download-Footnotes-current</div>
    <div className="ml-[31px]">
      <Svg w={17} h={17}><circle cx="8.500" cy="8.500" r="7" stroke="#7c8c8c" /><path d="M8.500 5v7M5 8.500h7" stroke="#6b7b7b" strokeWidth="1.600" /></Svg>
    </div>
    <div className="ml-auto flex items-center pr-[21px]">
      <div className="mr-[13px] flex flex-col gap-[3px]">
        <i className="size-[2px] bg-[#b4bfbf]" /><i className="size-[2px] bg-[#b4bfbf]" /><i className="size-[2px] bg-[#b4bfbf]" />
      </div>
      <div className="flex h-[15px] w-[15px] items-center justify-center border border-[#b4c2c2] bg-white"><Svg w={4} h={7}><path d="M4 0v7L0 3.500z" fill="#5f7070" /></Svg></div>
      <div className="flex h-[15px] w-[668px] justify-end bg-[#dfe5e5] pr-[14px]"><div className="w-[130px] border border-[#b4c2c2] bg-white" /></div>
      <div className="flex h-[15px] w-[15px] items-center justify-center border border-[#b4c2c2] bg-white"><Svg w={4} h={7}><path d="M0 0v7l4-3.500z" fill="#5f7070" /></Svg></div>
    </div>
  </div>
);

const StatusBar = () => (
  <div className="flex h-[19px] shrink-0 items-center bg-[#f4f8f8] text-[11px] tracking-[-0.2px] whitespace-nowrap text-[#4f5b5b]">
    <div className="ml-[7px] w-[45px]">Ready</div>
    <div>4 of 3714 records found</div>
    <div className="ml-auto flex h-full items-center">
      <div className="w-[121px]">Average: 2763542055</div>
      <div className="w-[68px]">Count: 192</div>
      <div className="w-[107px]">Sum: 5.19546E+11</div>
      <div className="flex h-full w-[36px] items-center justify-center bg-[#c9d3d3]">
        <Svg w={13} h={13}><path d="M0.500 0.500h12v12H0.500zM4.500 0v13M8.500 0v13M0 4.500h13M0 8.500h13" stroke="#5f6e6e" /></Svg>
      </div>
      <div className="flex w-[37px] justify-center">
        <Svg w={13} h={13}><path d="M0.500 0.500h12v12H0.500zM3 3h7v9M3 3v9M4.500 5.500h4M4.500 7.500h4M4.500 9.500h4" stroke="#6b7b7b" /></Svg>
      </div>
      <div className="flex w-[37px] justify-center">
        <Svg w={13} h={13}><path d="M0.500 0.500h12v12H0.500zM4.500 0.500v7h4v-7M0.500 7.500h4" stroke="#6b7b7b" /></Svg>
      </div>
      <div className="ml-[3px] h-[2px] w-[7px] bg-[#5f6e6e]" />
      <div className="ml-[4px] flex h-[12px] w-[96px] items-center justify-center">
        <div className="h-px w-[48px] bg-[#aab6b6]" /><div className="h-[11px] w-[4px] shrink-0 bg-[#5f6e6e]" /><div className="h-px w-[44px] bg-[#aab6b6]" />
      </div>
      <div className="ml-[3px]"><Svg w={9} h={9}><path d="M4.500 0.500v8M0.500 4.500h8" stroke="#5f6e6e" strokeWidth="2" /></Svg></div>
      <div className="ml-[14px] w-[34px]">110%</div>
    </div>
  </div>
);

const Callout = ({ className, children }: Kids & { className: string }) => (
  <div className={`absolute border-2 border-black bg-white pl-[11px] font-['Noto_Sans_CJK_KR',sans-serif] text-[26.100px] leading-[35px] whitespace-nowrap text-black shadow-[2px_2px_3px_rgba(0,0,0,0.4)] ${className}`}>
    {children}
  </div>
);

export default function App() {
  return (
    <div className="relative flex h-[993px] w-[1837px] flex-col overflow-hidden border-l border-[#c9d6cf] bg-[#218f1c] font-['Noto_Sans',sans-serif]">
      <TitleBar />
      <TabRow />
      <Ribbon />
      <FormulaBar />
      <Sheet />
      <SheetTabs />
      <StatusBar />
      <Chart />
      <div className="absolute inset-0 -left-px z-30">
        <Gallery />
        <Callout className="top-[182px] left-[54px] h-[96px] w-[651px] pt-[4px]">
          1. Select the cells containing the component name
          <br />
          and data values, as shown. Then click ‘Insert’.
        </Callout>
        <Callout className="top-[118px] left-[817px] h-[49px] w-[378px] pt-[4px]">2. Click the line chart icon.</Callout>
        <Callout className="top-[182px] left-[817px] h-[49px] w-[378px] pt-[4px]">3. Select this 2-D line option.</Callout>
        <svg width="1837" height="300" viewBox="0 0 1837 300" className="absolute top-0 left-0" fill="none" stroke="#000" strokeWidth="2">
          <path d="M149 183V57M141 64.500l8-8.500 8 8.500" />
          <path d="M818 119L735 92M745.500 87.500L734.500 91.500l6 10" />
          <path d="M818 193L735 166.500M745.500 161.500l-11 4.500 6 10" />
        </svg>
      </div>
    </div>
  );
}
